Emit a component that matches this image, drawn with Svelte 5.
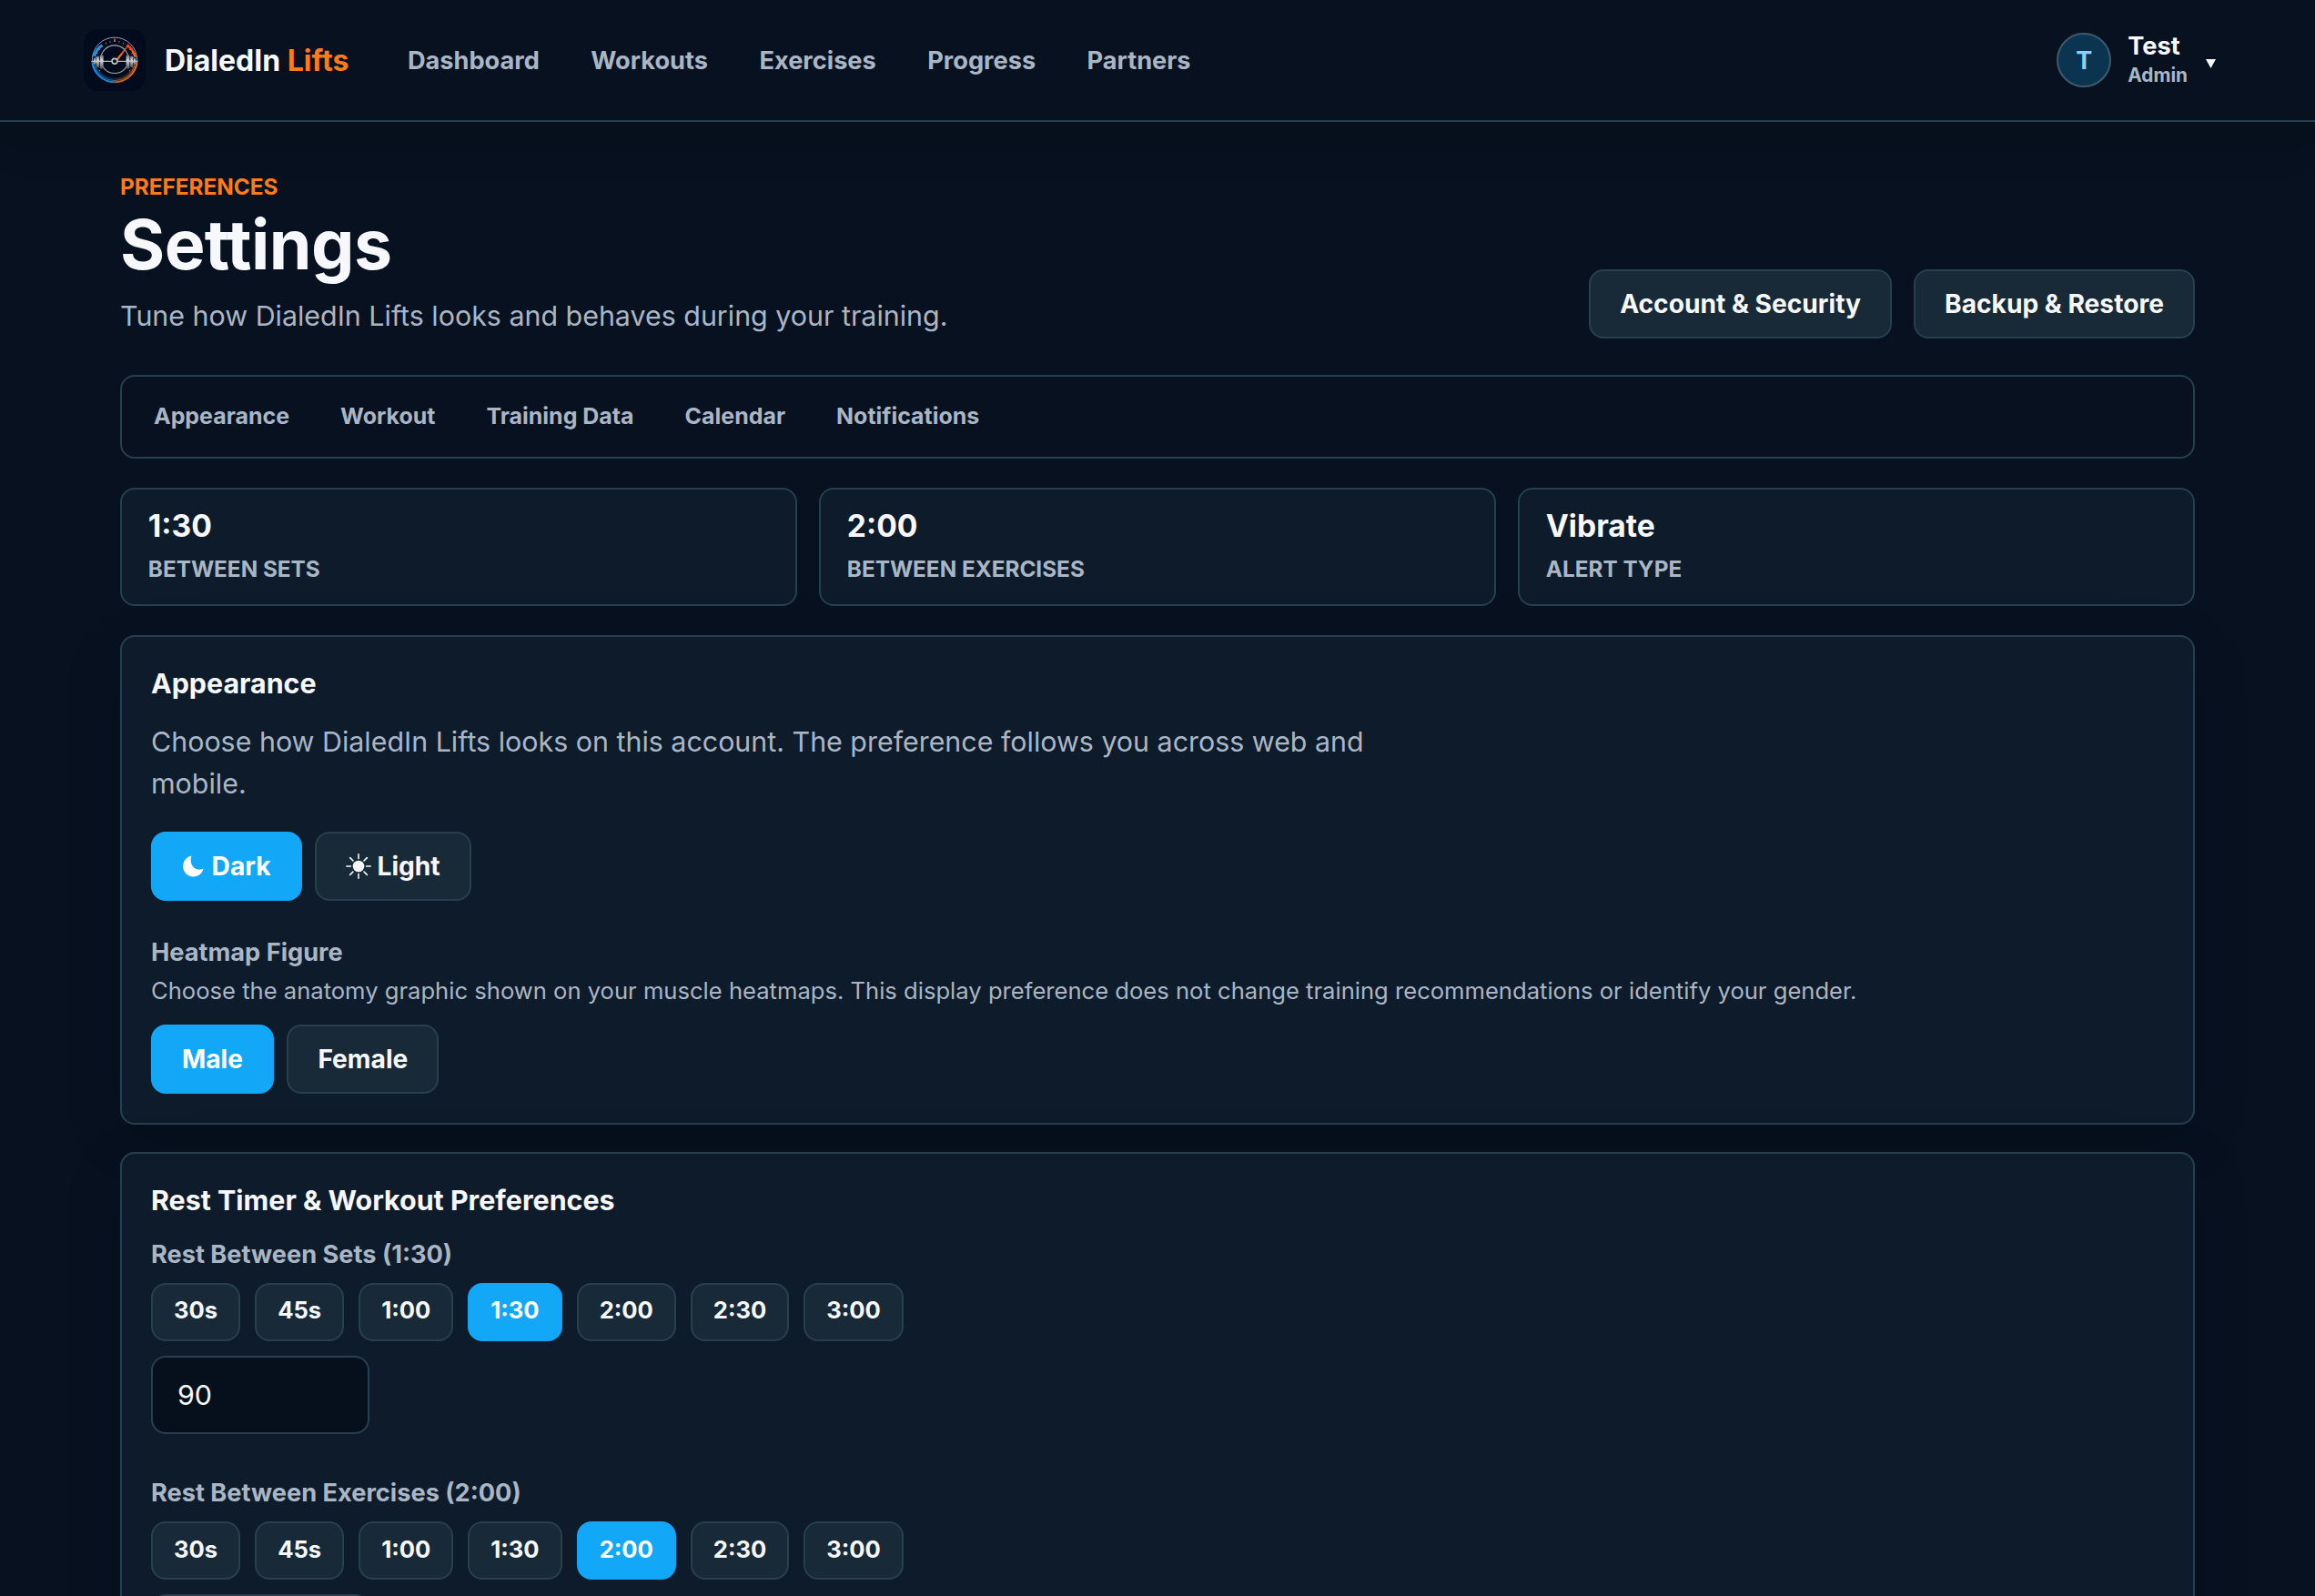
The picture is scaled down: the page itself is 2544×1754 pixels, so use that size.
<script>
  const navLinks = ['Dashboard', 'Workouts', 'Exercises', 'Progress', 'Partners'];
  const tabs = ['Appearance', 'Workout', 'Training Data', 'Calendar', 'Notifications'];
  const stats = [
    { value: '1:30', label: 'Between Sets' },
    { value: '2:00', label: 'Between Exercises' },
    { value: 'Vibrate', label: 'Alert Type' }
  ];
  const presets = [
    { label: '30s', seconds: 30 },
    { label: '45s', seconds: 45 },
    { label: '1:00', seconds: 60 },
    { label: '1:30', seconds: 90 },
    { label: '2:00', seconds: 120 },
    { label: '2:30', seconds: 150 },
    { label: '3:00', seconds: 180 }
  ];

  let theme = $state('dark');
  let figure = $state('male');
  let restSets = $state(90);
  let restExercises = $state(120);

  const clock = (s) => `${Math.floor(s / 60)}:${String(s % 60).padStart(2, '0')}`;
  const rays = [0, 45, 90, 135, 180, 225, 270, 315];
  const ticks = Array.from({ length: 19 }, (_, i) => -126 + i * 14);
</script>

<div class="page">
  <header class="topbar">
    <a class="brand" href="#home">
      <svg class="logo" viewBox="0 0 68 68" aria-hidden="true">
        <defs>
          <linearGradient id="rim" x1="0" x2="1" y1="0" y2="0">
            <stop offset="0" stop-color="#1593ee" />
            <stop offset="0.42" stop-color="#1c7fc6" />
            <stop offset="0.56" stop-color="#b8601c" />
            <stop offset="1" stop-color="#f0701c" />
          </linearGradient>
          <linearGradient id="steel" x1="0" x2="0" y1="0" y2="1">
            <stop offset="0" stop-color="#6d7074" />
            <stop offset="0.4" stop-color="#d6d7d9" />
            <stop offset="1" stop-color="#4c4f53" />
          </linearGradient>
        </defs>
        <rect width="68" height="68" rx="16" fill="#020b1d" />
        <path d="M10.5 37a24 24 0 0 0 47 0" fill="none" stroke="url(#rim)" stroke-width="5" opacity="0.22" />
        <circle cx="34" cy="33.7" r="24.6" fill="none" stroke="#9a9da2" stroke-width="1" />
        <path d="M9.5 36a24.6 24.6 0 0 0 49 0" fill="none" stroke="url(#rim)" stroke-width="1.8" />
        <path d="M12.2 40a22.6 22.6 0 0 0 43.6 0" fill="none" stroke="url(#rim)" stroke-width="0.8" />
        <path d="M11.4 30a23 23 0 0 1 8.8-12.2" fill="none" stroke="#1597f2" stroke-width="3" />
        <path d="M47.6 17.6a22.4 22.4 0 0 1 5.6 5.6" fill="none" stroke="#f4401e" stroke-width="3" />
        <path d="M53.2 23.2a22.4 22.4 0 0 1 3.6 7.4" fill="none" stroke="#ff641e" stroke-width="2.6" />
        {#each ticks as a}
          <line x1="34" y1="12.6" x2="34" y2="14" stroke="#a2a5aa" stroke-width="0.9" transform="rotate({a} 34 33.7)" />
        {/each}
        <line x1="34" y1="10.4" x2="34" y2="14" stroke="#f47a1f" stroke-width="1.4" />
        <circle cx="34" cy="33.2" r="15.3" fill="none" stroke="#a4a7ab" stroke-width="1.1" />
        <path d="M8.4 35.3h51.2" stroke="#b9bbbe" stroke-width="1.3" />
        <g fill="url(#steel)">
          <rect x="11" y="31.6" width="2.4" height="8" rx="1" />
          <rect x="14" y="29.6" width="3" height="12.4" rx="1" />
          <rect x="17.8" y="28.4" width="3.8" height="15" rx="1" />
          <rect x="46.6" y="28.4" width="3.8" height="15" rx="1" />
          <rect x="51.2" y="29.6" width="3" height="12.4" rx="1" />
          <rect x="54.8" y="31.6" width="2.4" height="8" rx="1" />
        </g>
        <path d="M35.4 33.4 48.7 18 38 33.6Z" fill="#ff7a1c" stroke="#ff5a1c" stroke-width="0.8" />
        <circle cx="34" cy="35.3" r="2.9" fill="#0b1220" stroke="#c3c5c8" stroke-width="1.6" />
      </svg>
      <span class="brand-name">DialedIn <span class="accent">Lifts</span></span>
    </a>
    <nav class="main-nav">
      {#each navLinks as link}
        <a href="#{link.toLowerCase()}">{link}</a>
      {/each}
    </nav>
    <button class="account">
      <span class="avatar">T</span>
      <span class="who">
        <span class="who-name">Test</span>
        <span class="who-role">Admin</span>
      </span>
      <svg class="caret" viewBox="0 0 10 9" aria-hidden="true"><path d="M0 0h10L5 9Z" fill="currentColor" /></svg>
    </button>
  </header>

  <main>
    <section class="intro">
      <div class="intro-text">
        <div class="eyebrow">Preferences</div>
        <h1>Settings</h1>
        <p class="lead">Tune how DialedIn Lifts looks and behaves during your training.</p>
      </div>
      <div class="intro-actions">
        <button class="btn">Account &amp; Security</button>
        <button class="btn">Backup &amp; Restore</button>
      </div>
    </section>

    <nav class="tabs">
      {#each tabs as tab}
        <a href="#{tab.toLowerCase().replace(' ', '-')}">{tab}</a>
      {/each}
    </nav>

    <section class="stats">
      {#each stats as stat}
        <div class="stat">
          <div class="stat-value">{stat.value}</div>
          <div class="stat-label">{stat.label}</div>
        </div>
      {/each}
    </section>

    <section class="card">
      <h2>Appearance</h2>
      <p class="lead card-lead">Choose how DialedIn Lifts looks on this account. The preference follows you across web and mobile.</p>
      <div class="choices">
        <button class="btn" class:active={theme === 'dark'} onclick={() => (theme = 'dark')}>
          <svg class="moon" viewBox="0 0 24 24" aria-hidden="true">
            <path d="M10.4 .6C4.800 1.600 1.200 6.600 1.200 12.200 1.200 18.600 6.200 23.400 12.400 23.400 18 23.400 22.800 19.800 23.600 14.200 21.800 15.400 19.800 15.800 17.800 15.600 11.600 15 8 7.600 10.400 .6Z" fill="currentColor" />
          </svg>
          Dark
        </button>
        <button class="btn" class:active={theme === 'light'} onclick={() => (theme = 'light')}>
          <svg class="sun" viewBox="0 0 28 28" aria-hidden="true">
            <circle cx="14" cy="14" r="6.3" fill="currentColor" />
            {#each rays as a}
              <line x1="14" y1="0.8" x2="14" y2="5.4" stroke="currentColor" stroke-width="1.6" stroke-linecap="round" transform="rotate({a} 14 14)" />
            {/each}
          </svg>
          Light
        </button>
      </div>
      <div class="field-label figure-label">Heatmap Figure</div>
      <p class="help">Choose the anatomy graphic shown on your muscle heatmaps. This display preference does not change training recommendations or identify your gender.</p>
      <div class="choices">
        <button class="btn" class:active={figure === 'male'} onclick={() => (figure = 'male')}>Male</button>
        <button class="btn" class:active={figure === 'female'} onclick={() => (figure = 'female')}>Female</button>
      </div>
    </section>

    <section class="card">
      <h2>Rest Timer &amp; Workout Preferences</h2>
      <div class="field">
        <div class="field-label">Rest Between Sets ({clock(restSets)})</div>
        <div class="chips">
          {#each presets as p}
            <button class="chip" class:active={restSets === p.seconds} onclick={() => (restSets = p.seconds)}>{p.label}</button>
          {/each}
        </div>
        <input type="text" inputmode="numeric" bind:value={restSets} aria-label="Rest between sets in seconds" />
      </div>
      <div class="field">
        <div class="field-label">Rest Between Exercises ({clock(restExercises)})</div>
        <div class="chips">
          {#each presets as p}
            <button class="chip" class:active={restExercises === p.seconds} onclick={() => (restExercises = p.seconds)}>{p.label}</button>
          {/each}
        </div>
        <input type="text" inputmode="numeric" bind:value={restExercises} aria-label="Rest between exercises in seconds" />
      </div>
    </section>
  </main>
</div>

<style>
  :global(body) {
    margin: 0;
    background: #07111f;
    overflow: hidden;
  }

  .page {
    --text: #f7f8fc;
    --muted: #a9b6c5;
    --line: #283f50;
    --panel: #0e1b2a;
    --raised: #182a38;
    --blue: #12a8f7;
    --orange: #ff7a1a;
    box-sizing: border-box;
    height: 1754px;
    overflow: hidden;
    background: #07111f;
    color: var(--text);
    font-family: Inter, 'Liberation Sans', sans-serif;
    font-size: 30.4px;
    -webkit-font-smoothing: antialiased;
  }

  .page :global(*) {
    box-sizing: border-box;
  }

  a {
    color: inherit;
    text-decoration: none;
  }

  button,
  input {
    font-family: inherit;
    color: inherit;
    margin: 0;
  }

  .topbar {
    position: relative;
    display: flex;
    align-items: center;
    height: 134px;
    padding: 0 109px 0 92px;
    border-bottom: 2px solid var(--line);
    background: #07111f;
    box-shadow: 0 16px 48px rgba(0, 0, 0, 0.16);
  }

  .brand {
    display: flex;
    align-items: center;
    gap: 21px;
  }

  .logo {
    display: block;
    width: 68px;
    height: 68px;
  }

  .brand-name {
    padding-top: 2px;
    font-size: 32px;
    font-weight: 700;
    line-height: 40px;
    white-space: nowrap;
  }

  .accent {
    color: var(--orange);
  }

  .main-nav {
    display: flex;
    gap: 56.4px;
    margin-left: 64.5px;
    color: var(--muted);
    font-size: 27.2px;
    font-weight: 700;
  }

  .account {
    display: flex;
    align-items: center;
    margin-left: auto;
    padding: 0;
    border: 0;
    background: none;
    text-align: left;
  }

  .avatar {
    display: grid;
    place-items: center;
    width: 60px;
    height: 60px;
    border: 2px solid #405a6c;
    border-radius: 50%;
    background: #0b3450;
    color: #86d3ff;
    font-size: 27px;
    font-weight: 700;
  }

  .who {
    display: flex;
    flex-direction: column;
    margin-left: 18px;
  }

  .who-name {
    font-size: 27.2px;
    font-weight: 700;
    line-height: 34px;
  }

  .who-role {
    color: var(--muted);
    font-size: 20.8px;
    font-weight: 700;
    line-height: 30px;
  }

  .caret {
    width: 11px;
    height: 10px;
    margin: 7px 0 0 20px;
  }

  main {
    display: flex;
    flex-direction: column;
    padding: 54px 132px 0;
  }

  .intro {
    display: flex;
    justify-content: space-between;
    align-items: flex-end;
    height: 184px;
  }

  .intro-text {
    padding-bottom: 2px;
  }

  .eyebrow {
    color: var(--orange);
    font-size: 24.32px;
    font-weight: 700;
    line-height: 36px;
    text-transform: uppercase;
  }

  h1 {
    margin: 4px 0 13px;
    font-size: 75.2px;
    font-weight: 700;
    line-height: 84px;
    letter-spacing: -0.6px;
  }

  .lead {
    margin: 0;
    color: var(--muted);
    font-size: 30.4px;
    line-height: 46px;
  }

  .intro-actions {
    display: flex;
    gap: 24px;
  }

  .btn {
    display: inline-flex;
    align-items: center;
    justify-content: center;
    height: 76px;
    padding: 0 32px 1px;
    border: 2px solid var(--line);
    border-radius: 16px;
    background: var(--raised);
    font-size: 28.16px;
    font-weight: 700;
  }

  .active {
    border-color: var(--blue);
    background: var(--blue);
    color: #fff;
  }

  .tabs {
    display: flex;
    align-items: center;
    gap: 8px;
    height: 92px;
    margin-top: 40px;
    padding: 0 11px 3px;
    border: 2px solid var(--line);
    border-radius: 16px;
    background: #07111f;
    color: var(--muted);
    font-size: 24.96px;
    font-weight: 700;
  }

  .tabs a {
    padding: 0 24px;
  }

  .stats {
    display: grid;
    grid-template-columns: repeat(3, 1fr);
    gap: 24px;
    margin-top: 32px;
  }

  .stat {
    height: 130px;
    padding: 18px 28.8px;
    border: 2px solid var(--line);
    border-radius: 16px;
    background: var(--panel);
  }

  .stat-value {
    font-size: 33.6px;
    font-weight: 700;
    line-height: 44px;
  }

  .stat-label {
    margin-top: 7px;
    color: var(--muted);
    font-size: 24.32px;
    font-weight: 700;
    line-height: 36px;
    text-transform: uppercase;
  }

  .card {
    margin-top: 32px;
    padding: 31px 32px 32px;
    border: 2px solid var(--line);
    border-radius: 16px;
    background: var(--panel);
    box-shadow: 0 16px 72px rgba(0, 0, 0, 0.09);
  }

  .card + .card {
    margin-top: 30px;
  }

  h2 {
    margin: 0;
    font-size: 30.4px;
    font-weight: 700;
    line-height: 40px;
  }

  .card-lead {
    max-width: 1400px;
    margin: 21px 0 30px;
  }

  .choices {
    display: flex;
    gap: 14.4px;
  }

  .moon {
    width: 24px;
    height: 24px;
    margin-right: 8.6px;
  }

  .sun {
    width: 28px;
    height: 28px;
    margin-right: 6.6px;
  }

  .field-label {
    color: var(--muted);
    font-size: 27.2px;
    font-weight: 700;
    line-height: 40px;
  }

  .figure-label {
    margin-top: 37px;
  }

  .help {
    margin: 2px 0 18px;
    color: var(--muted);
    font-size: 25.6px;
    line-height: 39px;
  }

  .field {
    margin-top: 20px;
  }

  .field + .field {
    margin-top: 45px;
  }

  .chips {
    display: flex;
    gap: 16px;
    margin-top: 11px;
  }

  .chip {
    height: 64px;
    padding: 0 23px 6px;
    border: 2px solid var(--line);
    border-radius: 16px;
    background: var(--raised);
    font-size: 25.6px;
    font-weight: 700;
  }

  .field + .field .chip {
    padding-bottom: 4px;
  }

  .chip.active {
    border-color: var(--blue);
    background: var(--blue);
  }

  input {
    display: block;
    width: 240px;
    height: 86px;
    margin-top: 16px;
    padding: 0 27px;
    border: 2px solid var(--line);
    border-radius: 16px;
    outline: none;
    background: #06101d;
    font-size: 30.4px;
  }
</style>
